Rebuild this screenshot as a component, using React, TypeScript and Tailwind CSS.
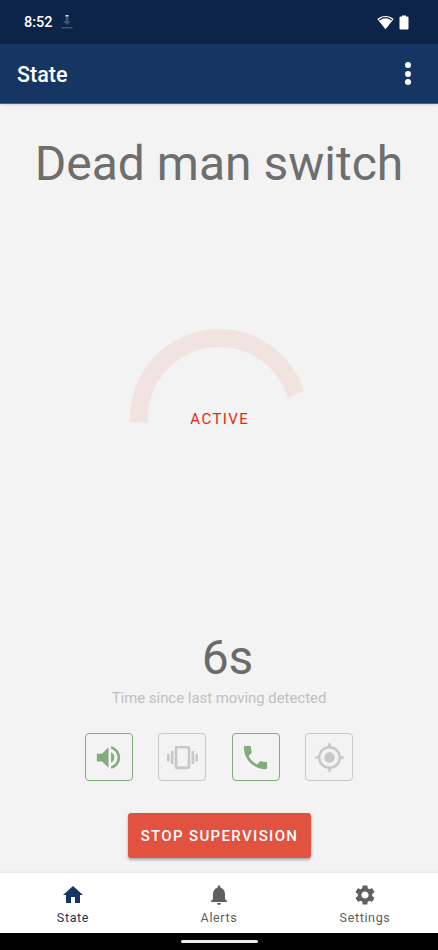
import React from 'react';
import type { IconType } from 'react-icons';
import {
  MdGpsFixed,
  MdHome,
  MdNotifications,
  MdPhone,
  MdSettings,
  MdVibration,
  MdVolumeUp,
} from 'react-icons/md';
import clsx from 'clsx';

const channels: { id: string; icon: IconType; enabled: boolean }[] = [
  { id: 'sound', icon: MdVolumeUp, enabled: true },
  { id: 'vibration', icon: MdVibration, enabled: false },
  { id: 'call', icon: MdPhone, enabled: true },
  { id: 'location', icon: MdGpsFixed, enabled: false },
];

const tabs: { label: string; icon: IconType }[] = [
  { label: 'State', icon: MdHome },
  { label: 'Alerts', icon: MdNotifications },
  { label: 'Settings', icon: MdSettings },
];

const StatusBar: React.FC = () => (
  <div className="flex h-11 shrink-0 items-center bg-[#0b2447] pl-6 pr-[29px] text-white">
    <span className="pt-0.5 text-[14.5px] font-medium leading-none">8:52</span>
    <svg className="ml-[8px] h-4 w-3" viewBox="0 0 12 16">
      <path d="M4.5 2.500h3V7H10l-4 4-4-4h2.500z" fill="#3f5473" />
      <path d="M0.500 13h11v1.500H.5z" fill="#3f5473" />
      <path d="M4.500 1h3v1.500h-3z" fill="#e5e8ed" />
    </svg>
    <svg className="ml-auto h-[15px] w-[17px]" viewBox="0 0 17 15">
      <path d="M8.500 14.200.300 4C5 0 12 0 16.700 4z" fill="#fff" />
      <path d="M2.300 4.900c3.800-2.700 8.600-2.700 12.400 0" fill="none" stroke="#0b2447" strokeWidth="1.200" />
    </svg>
    <svg className="ml-[5px] h-[15px] w-[10px]" viewBox="0 0 10 15">
      <path d="M3 0.500h4V1.500h1.500q1 0 1 1v11q0 1-1 1h-7q-1 0-1-1v-11q0-1 1-1H3z" fill="#fff" />
    </svg>
  </div>
);

const AppBar: React.FC = () => (
  <header className="flex h-[60px] shrink-0 items-center justify-between border-b border-[#4c6283] bg-[#153663] pl-[17px] pr-[27px] text-white shadow-sm">
    <h1 className="pt-[3px] text-[21.500px] font-medium leading-none">State</h1>
    <div className="flex flex-col gap-[2.500px]">
      <span className="size-[6px] rounded-full bg-white" />
      <span className="size-[6px] rounded-full bg-white" />
      <span className="size-[6px] rounded-full bg-white" />
    </div>
  </header>
);

// Progress arc with the current state written in its middle
const StateGauge: React.FC = () => (
  <div className="mt-[135px] flex flex-col items-center">
    <svg className="h-[95px] w-[178px]" viewBox="0 0 178 95">
      <path
        d="M0.100 93A89 89 0 0 1 89 0A89 89 0 0 1 174 61.700L157.700 69A71 71 0 0 0 89 18A71 71 0 0 0 18 93.700z"
        fill="#f0e3e0"
      />
    </svg>
    <span className="-mt-[13px] pl-[1.500px] text-[15px] leading-4 tracking-[1.400px] text-[#e5290f]">
      ACTIVE
    </span>
  </div>
);

const BottomNav: React.FC<{ active: string }> = ({ active }) => (
  <nav className="grid h-[60px] shrink-0 grid-cols-3 bg-white shadow-[0_-1px_2px_rgba(0,0,0,0.06)]">
    {tabs.map(({ label, icon: Icon }) => (
      <div
        key={label}
        className={clsx(
          'flex flex-col items-center pt-[9.500px]',
          label === active ? 'text-[#153663]' : 'text-[#606060]'
        )}
      >
        <Icon className="size-6" />
        <span className="mt-[3.500px] text-[12.500px] leading-4 tracking-[0.650px]">{label}</span>
      </div>
    ))}
  </nav>
);

const App: React.FC = () => {
  return (
    <div className="flex h-[950px] w-[438px] flex-col overflow-hidden bg-[#f3f3f3] font-['Roboto',sans-serif]">
      <StatusBar />
      <AppBar />

      <main className="flex flex-1 flex-col items-center">
        <h2 className="mt-[29px] whitespace-nowrap text-[48px] leading-[61px] text-[#6e6e6e]">
          Dead man switch
        </h2>

        <StateGauge />

        <div className="mt-auto pl-[17px] text-[48px] leading-[56px] text-[#6b6b6b]">6s</div>
        <p className="mt-[2px] text-[14.900px] leading-5 text-[#c0c0c0]">
          Time since last moving detected
        </p>

        <div className="mt-[25px] flex gap-[25.500px]">
          {channels.map(({ id, icon: Icon, enabled }) => (
            <div
              key={id}
              className={clsx(
                'flex size-12 items-center justify-center rounded-[4px] border',
                enabled ? 'border-[#80ad7b] text-[#80ad7b]' : 'border-[#c8c8c8] text-[#c8c8c8]'
              )}
            >
              <Icon className="size-[31px]" />
            </div>
          ))}
        </div>

        <button className="mb-[15px] mt-8 h-[45px] w-[183px] whitespace-nowrap rounded-[3px] bg-[#e15241] pl-px pt-px text-[15px] font-medium tracking-[1.350px] text-white shadow-[0_2px_3px_rgba(0,0,0,0.3)]">
          STOP SUPERVISION
        </button>
      </main>

      <BottomNav active="State" />

      <div className="flex h-[17px] shrink-0 items-center justify-center bg-black">
        <div className="h-[3px] w-[77px] rounded-full bg-[#ececec]" />
      </div>
    </div>
  );
};

export default App;
